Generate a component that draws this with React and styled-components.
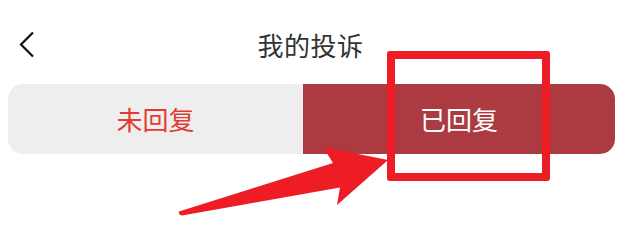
import React from "react";
import styled, { createGlobalStyle } from "styled-components";

const GlobalStyle = createGlobalStyle`
  html, body {
    margin: 0;
    padding: 0;
    background: #ffffff;
  }
  body {
    font-family: "Noto Sans CJK SC", "Noto Sans", sans-serif;
  }
`;

const Page = styled.div`
  position: relative;
  width: 621px;
  height: 249px;
  overflow: hidden;
  background: #ffffff;
`;

const Header = styled.div`
  box-sizing: border-box;
  height: 84px;
  padding-top: 6px;
  display: grid;
  grid-template-columns: 1fr auto 1fr;
  align-items: center;
`;

const Back = styled.div`
  padding-left: 19px;
  display: flex;
  align-items: center;
`;

const Title = styled.div`
  font-size: 26px;
  line-height: 30px;
  color: #333333;
  letter-spacing: 0.5px;
`;

const Tabs = styled.div`
  margin-left: 8px;
  width: 607px;
  height: 70px;
  display: grid;
  grid-template-columns: 295px 1fr;
  border-radius: 15px;
  overflow: hidden;
`;

const Tab = styled.div`
  display: flex;
  align-items: center;
  justify-content: center;
  font-size: 26px;
  line-height: 30px;
  background: ${({ active }) => (active ? "#ab3a41" : "#eeeeee")};
  color: ${({ active }) => (active ? "#ffffff" : "#e23b33")};
`;

// annotation drawn over the screenshot
const Marker = styled.div`
  position: absolute;
  left: 387px;
  top: 51px;
  width: 163px;
  height: 130px;
  box-sizing: border-box;
  border: 8.5px solid #ee1c25;
  border-radius: 3px;
`;

const Arrow = styled.svg`
  position: absolute;
  left: 0;
  top: 0;
`;

export default function App() {
  return (
    <Page>
      <GlobalStyle />
      <Header>
        <Back>
          <svg width="16" height="28" viewBox="0 0 16 28">
            <polyline
              points="14,1.5 2,13.5 14,25.5"
              fill="none"
              stroke="#111"
              strokeWidth="2.2"
            />
          </svg>
        </Back>
        <Title>我的投诉</Title>
        <div />
      </Header>
      <Tabs>
        <Tab>未回复</Tab>
        <Tab active>已回复</Tab>
      </Tabs>
      <Marker />
      <Arrow width="621" height="249" viewBox="0 0 621 249">
        <path
          d="M179 211.5 L333 163 L323 147 L388 160 L337 205 L340 187.5 L182 215.5 Q178 214.5 179 211.5 Z"
          fill="#ee1c25"
        />
      </Arrow>
    </Page>
  );
}
